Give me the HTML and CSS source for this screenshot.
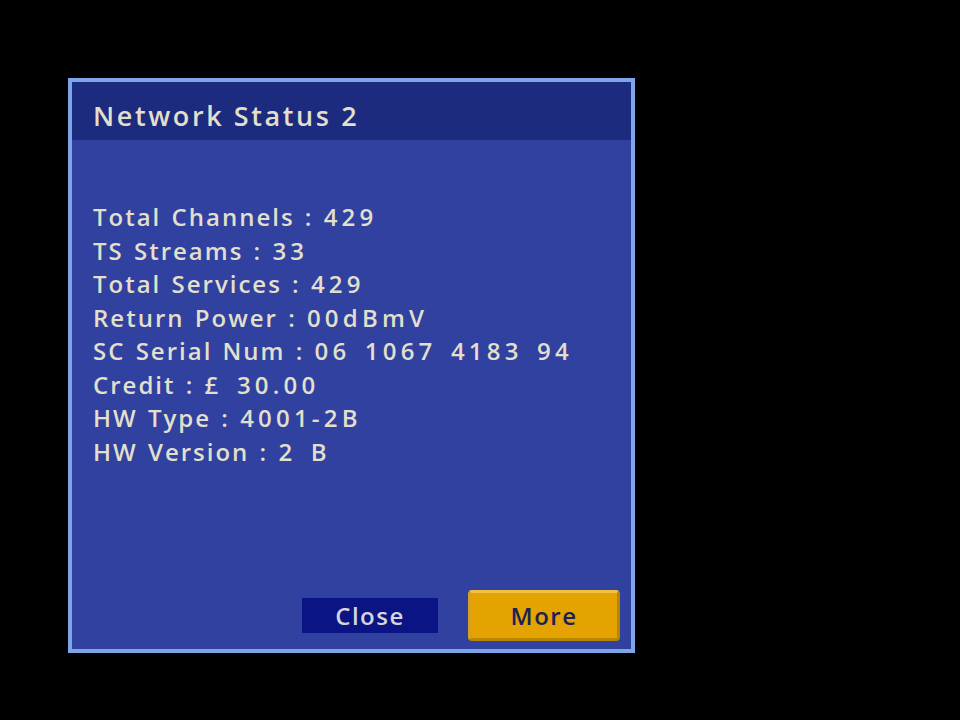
FILE: index.html
```html
<!DOCTYPE html>
<html lang="en">
<head>
  <meta charset="utf-8">
  <link rel="stylesheet" href="styles.css">
</head>
<body>

<div class="dialog">
  <div class="dialog-title">Network Status <span class="val">2</span></div>

  <div class="dialog-body">
    <div class="info-list">
      <div class="info-row">Total Channels : <span class="val">429</span></div>
      <div class="info-row">TS Streams : <span class="val">33</span></div>
      <div class="info-row">Total Services : <span class="val">429</span></div>
      <div class="info-row">Return Power : <span class="val">00dBmV</span></div>
      <div class="info-row">SC Serial Num : <span class="val">06 1067 4183 94</span></div>
      <div class="info-row">Credit : <span class="val">&pound; 30.00</span></div>
      <div class="info-row">HW Type : <span class="val">4001-2B</span></div>
      <div class="info-row">HW Version : <span class="val">2 B</span></div>
    </div>

    <div class="button-row">
      <div class="btn btn-close">Close</div>
      <div class="btn btn-more">More</div>
    </div>
  </div>
</div>

</body>
</html>
```

FILE: styles.css
```css
body {
  margin: 0;
  background-color: #000;
  width: 960px;
  height: 720px;
  overflow: hidden;
  }

.dialog {
  margin: 78px 0 0 68px;
  width: 559px;
  height: 567px;
  border: 4px solid #7ea6e6;
  background-color: #3041a0;
  display: flex;
  flex-direction: column;
  font-family: "Open Sans", sans-serif;
  font-weight: 600;
  color: #e2dfcc;
  }

.dialog-title {
  height: 58px;
  box-sizing: border-box;
  padding: 9px 0 0 21px;
  background-color: #1d2b7e;
  display: flex;
  align-items: center;
  white-space: pre;
  font-size: 27px;
  letter-spacing: 2.6px;
  }

.dialog-body {
  flex: 1;
  display: flex;
  flex-direction: column;
  padding: 0 11px 8px 21px;
  }

.info-list {
  margin-top: 60px;
  display: flex;
  flex-direction: column;
  }

.info-row {
  height: 33.5px;
  line-height: 33.5px;
  font-size: 24px;
  letter-spacing: 2px;
  word-spacing: 2px;
  }

.val {
  letter-spacing: 4.2px;
  word-spacing: 4px;
  }

.button-row {
  margin-top: auto;
  display: flex;
  align-items: center;
  justify-content: flex-end;
  gap: 30px;
  }

.btn {
  display: flex;
  align-items: center;
  justify-content: center;
  font-size: 24px;
  letter-spacing: 1.5px;
  }

.btn-close {
  width: 136px;
  height: 35px;
  background-color: #0a1484;
  color: #d4d6dc;
  }

.btn-more {
  width: 146px;
  height: 45px;
  background-color: #e4a300;
  border: 3px solid #b88500;
  border-top-color: #f0c040;
  border-left-color: #d8a020;
  border-radius: 4px;
  color: #1b2157;
  }
```
